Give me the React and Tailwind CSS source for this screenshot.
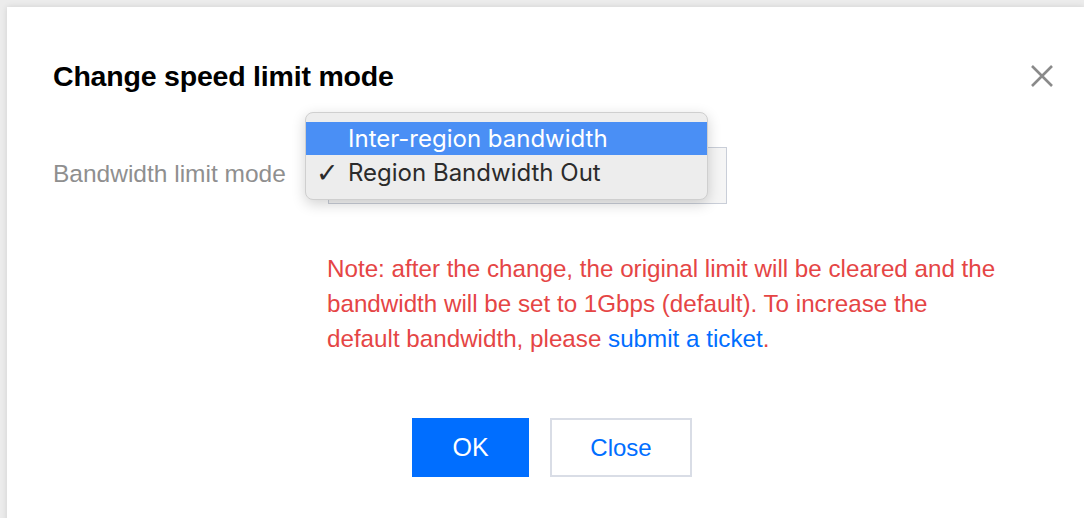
import React from "react";

function CloseIcon() {
  return (
    <svg width="24" height="24" viewBox="0 0 24 24" fill="none" stroke="#8a8a8a" strokeWidth="2.6" strokeLinecap="butt">
      <path d="M2 2 L22 22 M22 2 L2 22" />
    </svg>
  );
}

export default function App() {
  return (
    <div className="h-[518px] w-[1084px] overflow-hidden bg-[#ececec] pl-[7px] pt-[7px]" style={{ fontFamily: '"Liberation Sans", Arial, sans-serif' }}>
      <div className="relative h-[520px] bg-white shadow-[0_0_6px_rgba(0,0,0,0.12)]">
        {/* header */}
        <div className="flex items-center justify-between pl-[46px] pr-[30px] pt-[56px]">
          <h1 className="text-[28.5px] font-bold leading-[26px] tracking-[-0.2px] text-black">Change speed limit mode</h1>
          <CloseIcon />
        </div>

        {/* form row */}
        <div className="mt-[50px] flex pl-[46px]">
          <div className="w-[275px] pt-[20px] text-[24.5px] leading-[30px] text-[#8f8f8f]">Bandwidth limit mode</div>
          <div className="relative">
            <div className="mt-[8px] h-[57px] w-[399px] border border-[#c9ced8] bg-[#f5f5f5]" />
            {/* native select popup */}
            <div className="absolute left-[-23px] top-[-27px] w-[403px] rounded-[8px] border border-[#cfcfcf] bg-[#ededed] py-[9px] shadow-[0_4px_14px_rgba(0,0,0,0.18)]" style={{ fontFamily: 'Inter, "Noto Sans", sans-serif' }}>
              <div className="flex h-[33px] items-center bg-[#4a8ff5] pl-[42px] text-[24px] text-white">Inter-region bandwidth</div>
              <div className="flex h-[35px] items-center pl-[10px] text-[24px] text-[#2b2b2b]">
                <span className="w-[32px] text-[27px] leading-none" style={{ fontFamily: '"DejaVu Sans", sans-serif' }}>✓</span>
                <span>Region Bandwidth Out</span>
              </div>
            </div>
          </div>
        </div>

        {/* notice */}
        <div className="mt-[47px] pl-[320px] pr-[30px] text-[24.2px] leading-[35px] text-[#e54545]">
          Note: after the change, the original limit will be cleared and the<br />
          bandwidth will be set to 1Gbps (default). To increase the<br />
          default bandwidth, please <a className="text-[#006eff]">submit a ticket</a>.
        </div>

        {/* footer buttons */}
        <div className="mt-[62px] flex gap-[21px] pl-[405px]">
          <button className="h-[59px] w-[117px] bg-[#006eff] text-[25px] text-white">OK</button>
          <button className="h-[59px] w-[142px] border-2 border-[#d9dde6] bg-white text-[24px] text-[#006eff]">Close</button>
        </div>
      </div>
    </div>
  );
}
